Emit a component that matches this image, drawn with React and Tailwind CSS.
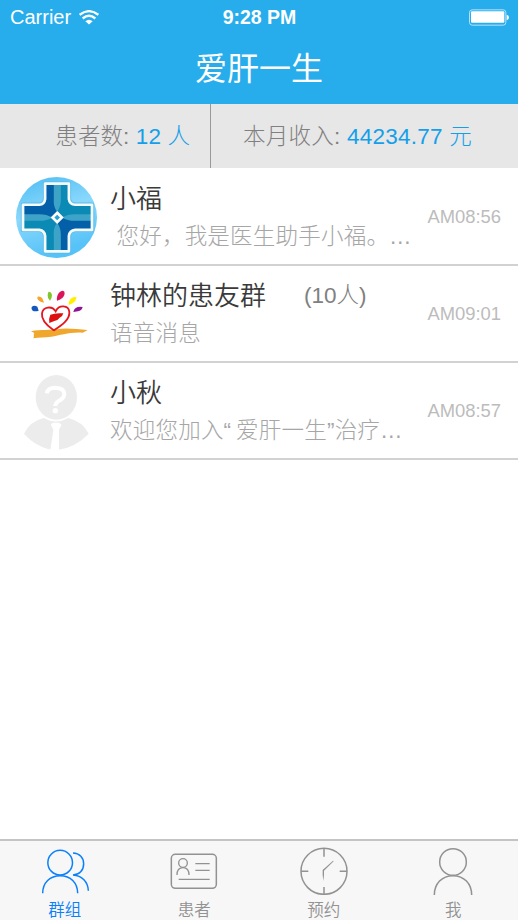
import React from "react";

const conversations = [
  {
    id: 1,
    name: "小福",
    message: "\u00a0您好，我是医生助手小福。…",
    time: "AM08:56",
    Avatar: AssistantAvatar,
  },
  {
    id: 2,
    name: "钟林的患友群",
    count: "(10人)",
    message: "语音消息",
    time: "AM09:01",
    Avatar: GroupAvatar,
  },
  {
    id: 3,
    name: "小秋",
    message: "欢迎您加入“\u2009爱肝一生”治疗…",
    time: "AM08:57",
    Avatar: DefaultAvatar,
  },
];

const tabs = [
  { label: "群组", Icon: GroupIcon, active: true },
  { label: "患者", Icon: CardIcon },
  { label: "预约", Icon: ClockIcon },
  { label: "我", Icon: PersonIcon },
];

const crossPath =
  "M113 40H184V86Q186 102 203 103H253V178H203Q186 180 184 196V242H113V196Q111 180 96 178H47V103H96Q111 102 113 86Z";

function AssistantAvatar() {
  return (
    <svg viewBox="26 20 242 242" className="ml-4 mt-px h-[81px] w-[81px]" aria-hidden="true">
      <defs>
        <linearGradient id="disc" x1="0" y1="0" x2="0.3" y2="1">
          <stop offset="0" stopColor="#4cbcf2" />
          <stop offset="0.5" stopColor="#8ad8fc" />
          <stop offset="1" stopColor="#55c2f8" />
        </linearGradient>
        <clipPath id="cross">
          <path d={crossPath} />
        </clipPath>
      </defs>
      <circle cx="147" cy="141" r="121" fill="url(#disc)" />
      <path d={crossPath} fill="none" stroke="#5db9e4" strokeWidth="13" strokeLinejoin="round" />
      <g clipPath="url(#cross)">
        <rect x="40" y="36" width="220" height="210" fill="#0b8ab5" />
        <path d="M40 36H149V141H40Z" fill="#045fa9" />
        <path d="M149 141H260V246H149Z" fill="#045fa9" />
        <path d="M139 36H160V88Q160 108 149 124Q137 108 139 88Z" fill="#3da4c8" />
        <path d="M139 246H160V192Q160 172 149 157Q137 172 139 192Z" fill="#3da4c8" />
        <path d="M40 131H96Q118 131 135 141Q118 151 96 151H40Z" fill="#3da4c8" />
        <path d="M260 131H202Q180 131 163 141Q180 151 202 151H260Z" fill="#3da4c8" />
      </g>
      <path d={crossPath} fill="none" stroke="#f4fbff" strokeWidth="8" strokeLinejoin="round" />
      <path d="M149 127L163 141L149 155L135 141Z" fill="#2aa0d8" stroke="#fff" strokeWidth="8" />
    </svg>
  );
}

function GroupAvatar() {
  return (
    <svg viewBox="0 0 240 210" className="ml-5 h-[70px] w-20" aria-hidden="true">
      <path
        d="M33 157C62 150 91 155 112 151C139 146 170 151 203 153L188 161C151 158 121 169 94 173C74 176 57 174 40 178C44 171 39 166 43 162Z"
        fill="#f0a72d"
      />
      <path
        d="M100 153C83 141 63 123 66 103C69 83 96 79 107 97C117 76 146 78 148 99C150 122 125 139 102 154"
        fill="none"
        stroke="#e51620"
        strokeWidth="5.5"
        strokeLinecap="round"
      />
      <path d="M91 107Q106 101 130 103Q128 113 119 116Q113 125 103 126L88 132Q86 117 91 107Z" fill="#dc1010" />
      <path d="M35 84Q42 77 52 83L56 95Q45 98 38 95Q33 90 35 84Z" fill="#1458bf" />
      <path d="M53 53Q61 51 67 58L72 71Q60 69 54 62Q50 57 53 53Z" fill="#f5a52a" />
      <path d="M86 38Q94 38 96 48Q96 58 90 65Q82 57 83 49Q83 42 86 38Z" fill="#83c52c" />
      <path d="M117 41Q127 32 133 38Q136 48 127 57Q119 64 111 65Q109 51 117 41Z" fill="#dd1459" />
      <path d="M152 59Q160 51 170 55Q168 67 158 73L146 78Q145 67 152 59Z" fill="#fff000" />
      <path d="M167 87Q176 81 188 84Q185 95 174 97L160 99Q161 91 167 87Z" fill="#8d1594" />
    </svg>
  );
}

function DefaultAvatar() {
  return (
    <svg viewBox="0 0 255 270" className="ml-[15px] mt-[3px] h-[90px] w-[85px]" aria-hidden="true">
      <ellipse cx="124" cy="91" rx="62" ry="67" fill="#ececec" />
      <path d="M27 200Q45 163 86 153Q123 174 160 153Q202 163 221 200Q182 242 124 250Q66 244 27 200Z" fill="#ececec" />
      <path d="M107 172L114 167H132L140 173L132 188V250H106L115 188Z" fill="#fff" />
      <path
        d="M95 79Q98 62 121 62Q148 63 148 82Q148 91 136 99Q121 107 121 117"
        fill="none"
        stroke="#fff"
        strokeWidth="12"
      />
      <circle cx="121" cy="131" r="8" fill="#fff" />
    </svg>
  );
}

function GroupIcon() {
  return (
    <svg viewBox="104 30 180 150" className="h-[50px] w-[60px]" fill="none" stroke="currentColor" strokeWidth="4.5" aria-hidden="true">
      <circle cx="179.500" cy="83" r="37" />
      <path d="M127 175C127 143 149 122 180 122C210 122 232 143 232 175" />
      <path d="M218 54C238 55 250 68 250 86C250 106 237 119 218 120C245 122 263 140 264 167" />
    </svg>
  );
}

function CardIcon() {
  return (
    <svg viewBox="493 30 180 150" className="h-[50px] w-[60px]" fill="none" stroke="currentColor" strokeWidth="4.5" aria-hidden="true">
      <rect x="515" y="58" width="135" height="102" rx="12" />
      <circle cx="550" cy="84" r="13" strokeWidth="4" />
      <path d="M532 120C532 106 539 98 550 98C561 98 568 106 568 120" strokeWidth="4" />
      <path d="M587 86H630M587 106H630M537 133H630" strokeWidth="4" />
    </svg>
  );
}

function ClockIcon() {
  return (
    <svg viewBox="107 30 180 150" className="h-[50px] w-[60px]" fill="none" stroke="currentColor" strokeWidth="4.5" aria-hidden="true">
      <circle cx="197" cy="109" r="69" />
      <path d="M197 40V65M197 156V178M128 109H150M244 109H266" />
      <path d="M193 105L224 77L226 79L197 107V120L195 138L193 120Z" fill="currentColor" stroke="none" />
    </svg>
  );
}

function PersonIcon() {
  return (
    <svg viewBox="496 30 180 150" className="h-[50px] w-[60px]" fill="none" stroke="currentColor" strokeWidth="4.5" aria-hidden="true">
      <circle cx="586" cy="81" r="40" />
      <path d="M530 180C530 146 553 122 586 122C619 122 642 146 642 180" />
    </svg>
  );
}

function StatusBar() {
  return (
    <div className="grid h-[34px] grid-cols-3 items-center pl-[10px] pr-[9px] text-white">
      <div className="flex items-center gap-2">
        <span className="text-[20px] leading-[34px]">Carrier</span>
        <svg viewBox="0 0 60 44" className="h-[15px] w-5" fill="none" stroke="#fff" strokeWidth="7" aria-hidden="true">
          <path d="M2 14Q30 -8 58 14" />
          <path d="M11 25Q30 9 49 25" />
          <path d="M19 33Q30 24 41 33L30 43Z" fill="#fff" stroke="none" />
        </svg>
      </div>
      <span className="text-center text-[19.5px] font-bold leading-[34px]">9:28 PM</span>
      <svg viewBox="0 0 120 50" className="h-[17px] w-10 justify-self-end" fill="none" aria-hidden="true">
        <rect x="1.500" y="2" width="109" height="46" rx="8" stroke="#b5e2fb" strokeWidth="3" />
        <rect x="6" y="6" width="100" height="35" rx="3" fill="#fff" />
        <path d="M113 17Q120 19 120 25Q120 31 113 33Z" fill="#fff" />
      </svg>
    </div>
  );
}

function ConversationRow({ name, count, message, time, Avatar }) {
  return (
    <li className="flex h-[97px] items-center border-b-2 border-[#d2d2d2]">
      <div className="w-[110px] shrink-0">
        <Avatar />
      </div>
      <div className="min-w-0 flex-1 pt-[3px]">
        <div className="flex items-center gap-[38px] whitespace-nowrap">
          <span className="text-[26px] font-[350] leading-[38px] text-[#3a3a3a]">{name}</span>
          {count && <span className="text-[22.5px] font-light leading-[38px] text-[#808080]">{count}</span>}
        </div>
        <p className="whitespace-nowrap text-[22.5px] font-light leading-[38px] tracking-[0.22px] text-[#a6a6a6]">{message}</p>
      </div>
      <span className="shrink-0 pr-[17px] pt-px text-[18.4px] text-[#bcbcbc]">{time}</span>
    </li>
  );
}

export default function App() {
  return (
    <div className="flex h-[920px] w-[518px] flex-col overflow-hidden bg-white font-['Liberation_Sans','Noto_Sans_CJK_SC',sans-serif]">
      <header className="h-[104px] shrink-0 bg-[#27adec]">
        <StatusBar />
        <h1 className="pt-px text-center text-[32px] leading-[69px] text-white">爱肝一生</h1>
      </header>

      <section className="flex h-16 shrink-0 items-center bg-[#e7e7e7] text-[22.5px] font-light text-[#808080]">
        <div className="flex h-full w-[211px] items-center justify-end whitespace-pre border-r border-[#999] pr-5 pt-0.5 tracking-[0.1px]">
          患者数: <span className="text-[#149fea]">12 人</span>
        </div>
        <div className="flex h-full flex-1 items-center whitespace-pre pl-8 pt-0.5 tracking-[0.25px]">
          本月收入: <span className="text-[#149fea]">44234.77 元</span>
        </div>
      </section>

      <ul className="flex-1 pt-px">
        {conversations.map((item) => (
          <ConversationRow key={item.id} {...item} />
        ))}
      </ul>

      <nav className="grid h-[81px] shrink-0 grid-cols-4 border-t-2 border-[#c4c4c4] bg-[#f7f7f7] pt-1">
        {tabs.map(({ label, Icon, active }) => (
          <button
            key={label}
            type="button"
            className={`flex flex-col items-center justify-start ${active ? "text-[#0a80fb]" : "text-[#929292]"}`}
          >
            <Icon />
            <span className="pt-0.5 text-[16.5px] font-[350] leading-[26px]">{label}</span>
          </button>
        ))}
      </nav>
    </div>
  );
}
